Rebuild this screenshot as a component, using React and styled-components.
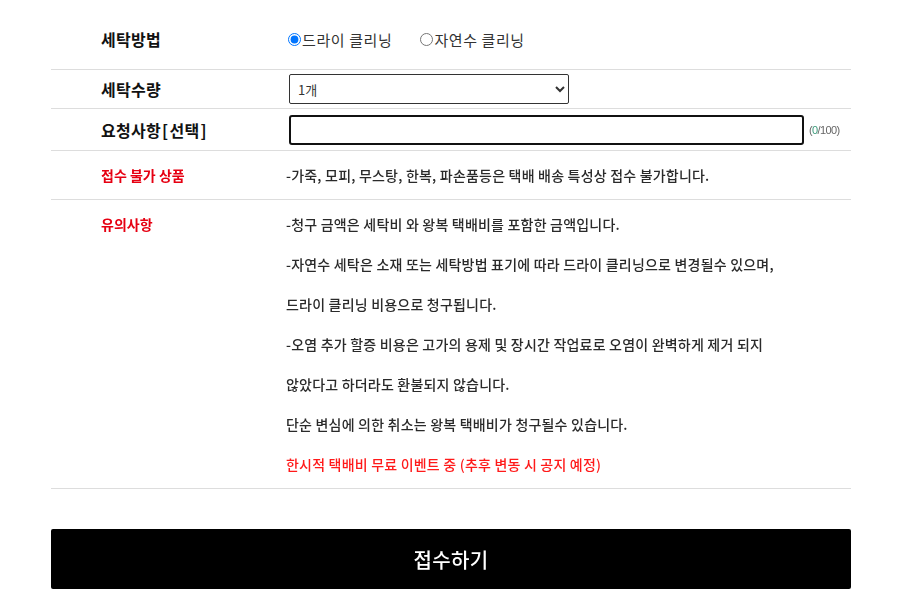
import React, { useState } from 'react';
import styled, { createGlobalStyle } from 'styled-components';

const GlobalStyle = createGlobalStyle`
  body {
    margin: 0;
    background: #fff;
    font-family: "Noto Sans CJK KR", "Noto Sans", sans-serif;
    color: #333;
  }
`;

const Wrapper = styled.div`
  width: 800px;
  margin: 0 0 0 51px;
  padding-top: 13px;
`;

const Table = styled.div`
  display: flex;
  flex-direction: column;
`;

const Row = styled.div`
  display: grid;
  grid-template-columns: 235px 1fr;
  align-items: ${(p) => (p.top ? 'start' : 'center')};
  border-bottom: 1px solid #ddd;
  padding: ${(p) => p.pad || '4px 0'};
`;

const Label = styled.div`
  padding-left: 50px;
  font-size: ${(p) => (p.warn ? '14px' : '16px')};
  letter-spacing: ${(p) => (p.warn ? '0' : '0.3px')};
  font-weight: 700;
  color: ${(p) => (p.warn ? '#e60012' : '#111')};
  line-height: ${(p) => (p.warn ? '40px' : '30px')};
`;

const Bracket = styled.span`
  margin: 0 1px;
`;

const Notes = styled.div`
  display: flex;
  flex-direction: column;
`;

const Note = styled.p`
  margin: 0;
  font-size: 14px;
  letter-spacing: 0.2px;
  font-weight: 500;
  line-height: 40px;
  color: ${(p) => (p.red ? '#ff1a1a' : '#2a2a2a')};
`;

const RadioGroup = styled.div`
  display: flex;
  gap: 26px;
  font-size: 15px;
  letter-spacing: 0.6px;
  color: #333;
`;

const RadioLabel = styled.label`
  display: flex;
  align-items: center;
  cursor: pointer;
  input {
    margin: 0 1px 0 2px;
    width: 13px;
    height: 13px;
  }
`;

const Select = styled.select`
  width: 280px;
  height: 30px;
  margin-left: 3px;
  padding: 0 4px;
  border: 1px solid #333;
  border-radius: 2px;
  background: #fff;
  font-family: "Noto Sans CJK KR", sans-serif;
  font-size: 13px;
  color: #333;
`;

const InputWrap = styled.div`
  display: flex;
  align-items: center;
  gap: 5px;
  margin-left: 3px;
`;

const TextInput = styled.input`
  width: 515px;
  height: 30px;
  box-sizing: border-box;
  border: 2px solid #111;
  border-radius: 3px;
  outline: none;
  padding: 0 3px;
  font-size: 13px;
`;

const Counter = styled.span`
  font-family: "Liberation Sans", Arial, sans-serif;
  font-size: 11px;
  letter-spacing: -0.6px;
  color: #666;
  em {
    font-style: normal;
    color: #3a9a7a;
  }
`;

const SubmitButton = styled.button`
  display: block;
  width: 100%;
  height: 60px;
  margin-top: 40px;
  border: none;
  border-radius: 2px;
  background: #000;
  color: #fff;
  font-family: "Noto Sans CJK KR", sans-serif;
  font-size: 20px;
  letter-spacing: 0.3px;
  font-weight: 500;
  cursor: pointer;
`;

export default function App() {
  const [method, setMethod] = useState('dry');
  const [memo, setMemo] = useState('');

  return (
    <Wrapper>
      <GlobalStyle />
      <Table>
        <Row pad="11px 0 15px">
          <Label>세탁방법</Label>
          <RadioGroup>
            <RadioLabel>
              <input
                type="radio"
                name="method"
                checked={method === 'dry'}
                onChange={() => setMethod('dry')}
              />
              드라이 클리닝
            </RadioLabel>
            <RadioLabel>
              <input
                type="radio"
                name="method"
                checked={method === 'water'}
                onChange={() => setMethod('water')}
              />
              자연수 클리닝
            </RadioLabel>
          </RadioGroup>
        </Row>
        <Row>
          <Label>세탁수량</Label>
          <div>
            <Select defaultValue="1">
              <option value="1">1개</option>
              <option value="2">2개</option>
              <option value="3">3개</option>
            </Select>
          </div>
        </Row>
        <Row pad="6px 0 5px">
          <Label>
            요청사항<Bracket>[</Bracket>선택<Bracket>]</Bracket>
          </Label>
          <InputWrap>
            <TextInput
              value={memo}
              maxLength={100}
              onChange={(e) => setMemo(e.target.value)}
              autoFocus
            />
            <Counter>
              (<em>{memo.length}</em>/100)
            </Counter>
          </InputWrap>
        </Row>
        <Row>
          <Label warn>접수 불가 상품</Label>
          <Note>-가죽, 모피, 무스탕, 한복, 파손품등은 택배 배송 특성상 접수 불가합니다.</Note>
        </Row>
        <Row top>
          <Label warn>유의사항</Label>
          <Notes>
            <Note>-청구 금액은 세탁비 와 왕복 택배비를 포함한 금액입니다.</Note>
            <Note>-자연수 세탁은 소재 또는 세탁방법 표기에 따라 드라이 클리닝으로 변경될수 있으며,</Note>
            <Note>드라이 클리닝 비용으로 청구됩니다.</Note>
            <Note>-오염 추가 할증 비용은 고가의 용제 및 장시간 작업료로 오염이 완벽하게 제거 되지</Note>
            <Note>않았다고 하더라도 환불되지 않습니다.</Note>
            <Note>단순 변심에 의한 취소는 왕복 택배비가 청구될수 있습니다.</Note>
            <Note red>한시적 택배비 무료 이벤트 중 (추후 변동 시 공지 예정)</Note>
          </Notes>
        </Row>
      </Table>
      <SubmitButton>접수하기</SubmitButton>
    </Wrapper>
  );
}
